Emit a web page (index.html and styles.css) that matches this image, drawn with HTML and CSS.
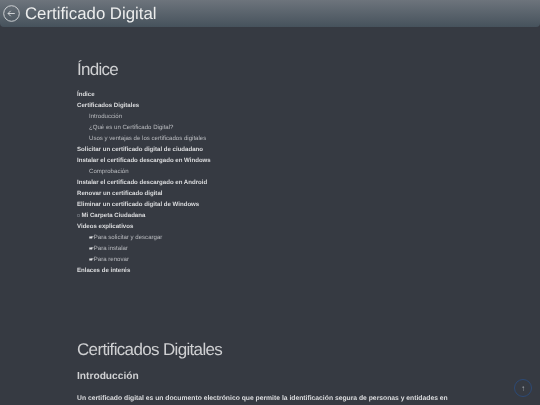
FILE: index.html
```html
<!DOCTYPE html>
<html lang="es">
<head>
  <meta charset="UTF-8">
  <title>Certificado Digital</title>
  <link rel="stylesheet" href="styles.css">
</head>
<body>

<header class="topbar">
  <svg class="back" width="17" height="17" viewBox="0 0 17 17" fill="none" stroke="#dadcdf" stroke-width="0.9">
    <circle cx="8.5" cy="8.5" r="7.8"/>
    <path d="M11.8 8.5H5M7.7 5.8L5 8.5L7.7 11.2"/>
  </svg>
  <span class="title">Certificado Digital</span>
</header>

<main class="content">
  <h1 class="index-title">Índice</h1>

  <ul class="toc">
    <li class="main">Índice</li>
    <li class="main">Certificados Digitales</li>
    <li class="sub">Introducción</li>
    <li class="sub">¿Qué es un Certificado Digital?</li>
    <li class="sub">Usos y ventajas de los certificados digitales</li>
    <li class="main">Solicitar un certificado digital de ciudadano</li>
    <li class="main">Instalar el certificado descargado en Windows</li>
    <li class="sub">Comprobación</li>
    <li class="main">Instalar el certificado descargado en Android</li>
    <li class="main">Renovar un certificado digital</li>
    <li class="main">Eliminar un certificado digital de Windows</li>
    <li class="main"><span class="box"></span>Mi Carpeta Ciudadana</li>
    <li class="main">Videos explicativos</li>
    <li class="sub"><span class="mark">🖝</span>Para solicitar y descargar</li>
    <li class="sub"><span class="mark">🖝</span>Para instalar</li>
    <li class="sub"><span class="mark">🖝</span>Para renovar</li>
    <li class="main">Enlaces de interés</li>
  </ul>

  <h2 class="section-title">Certificados Digitales</h2>
  <h3 class="section-sub">Introducción</h3>
  <p class="lead">Un certificado digital es un documento electrónico que permite la identificación segura de personas y entidades en</p>
</main>

<button class="to-top">↑</button>

</body>
</html>
```

FILE: styles.css
```css
* {
  box-sizing: border-box;
}

html, body {
  height: 405px;
  overflow: hidden;
}

body {
  margin: 0;
  background-color: #363a42;
  color: #dcdddf;
  font-family: "Liberation Sans", Arial, sans-serif;
  text-rendering: geometricPrecision;
}

.topbar {
  display: flex;
  align-items: center;
  gap: 5px;
  height: 27px;
  padding-left: 3px;
  background: linear-gradient(#6d747c, #46525c);
  border-bottom-left-radius: 4px;
  border-bottom-right-radius: 4px;
}

.back {
  flex: none;
}

.title {
  font-size: 16.8px;
  color: #eceded;
  will-change: transform;
}

.content {
  padding: 32px 77px 0;
  will-change: transform;
}

.index-title {
  margin: 0 0 8px;
  font-size: 17px;
  font-weight: normal;
  letter-spacing: -0.72px;
  line-height: 22px;
  color: #cfd0d2;
}

.toc {
  list-style: none;
  margin: 0;
  padding: 0;
  font-size: 6.08px;
  line-height: 11px;
}

.toc li {
  height: 11px;
}

.toc .main {
  font-weight: bold;
}

.toc .sub {
  padding-left: 12px;
  color: #b9bbbf;
}

.box {
  display: inline-block;
  width: 3px;
  height: 3px;
  margin-right: 1.5px;
  border: 0.5px solid #5c6068;
}

.mark {
  font-family: "DejaVu Sans", sans-serif;
  font-size: 6.5px;
  line-height: 0;
  color: #dcdddf;
}

.section-title {
  margin: 63px 0 0;
  font-size: 17px;
  font-weight: normal;
  letter-spacing: -0.66px;
  line-height: 22px;
  color: #cfd0d2;
}

.section-sub {
  margin: 9px 0 0;
  font-size: 10.2px;
  line-height: 14px;
  color: #d0d1d3;
}

.lead {
  margin: 11px 0 0;
  font-size: 6.77px;
  font-weight: bold;
  line-height: 8px;
  white-space: nowrap;
}

.to-top {
  position: fixed;
  right: 8px;
  bottom: 8px;
  width: 18px;
  height: 18px;
  padding: 0;
  border: 1px solid #2d4a76;
  border-radius: 50%;
  background: transparent;
  color: #a9adb2;
  font-size: 8px;
  font-weight: bold;
  font-family: "Liberation Sans", Arial, sans-serif;
}
```
